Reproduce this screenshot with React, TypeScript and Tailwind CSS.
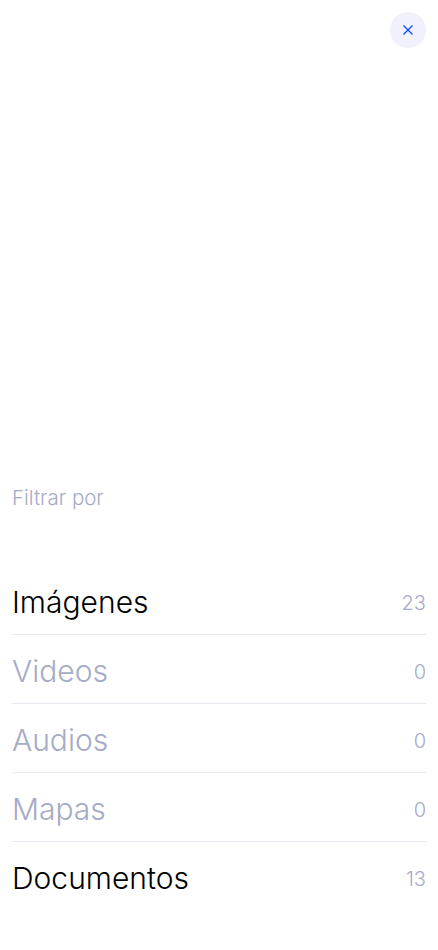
import React from "react";

const rows = [
  { label: "Imágenes", count: 23, active: true },
  { label: "Videos", count: 0, active: false },
  { label: "Audios", count: 0, active: false },
  { label: "Mapas", count: 0, active: false },
  { label: "Documentos", count: 13, active: true },
];

export default function App() {
  return (
    <div
      className="w-[438px] h-[950px] bg-white flex flex-col px-3"
      style={{ fontFamily: "Inter, 'Noto Sans', sans-serif" }}
    >
      <div className="flex justify-end pt-3">
        <button className="w-9 h-9 rounded-full bg-[#f1f1fd] flex items-center justify-center">
          <svg width="12" height="12" viewBox="0 0 12 12" fill="none">
            <path d="M1.5 1.5L10.5 10.5M10.5 1.5L1.5 10.5" stroke="#0a4cff" strokeWidth="1.3" />
          </svg>
        </button>
      </div>
      <div className="flex-1" />
      <div className="text-[20.5px] leading-[28px] text-[#a6abc6] font-light">Filtrar por</div>
      <div className="mt-[54px] flex flex-col">
        {rows.map((r, i) => (
          <div
            key={r.label}
            className={`h-[69px] flex items-center justify-between ${i < rows.length - 1 ? "border-b border-[#e9e9f1]" : ""}`}
          >
            <span className={`text-[30px] font-light leading-none pt-[3px] ${r.active ? "text-black" : "text-[#a6abc6]"}`}>
              {r.label}
            </span>
            <span className="text-[20px] font-light text-[#a6abc6] leading-none pt-[5px]">{r.count}</span>
          </div>
        ))}
      </div>
      <div className="h-[39px]" />
    </div>
  );
}
